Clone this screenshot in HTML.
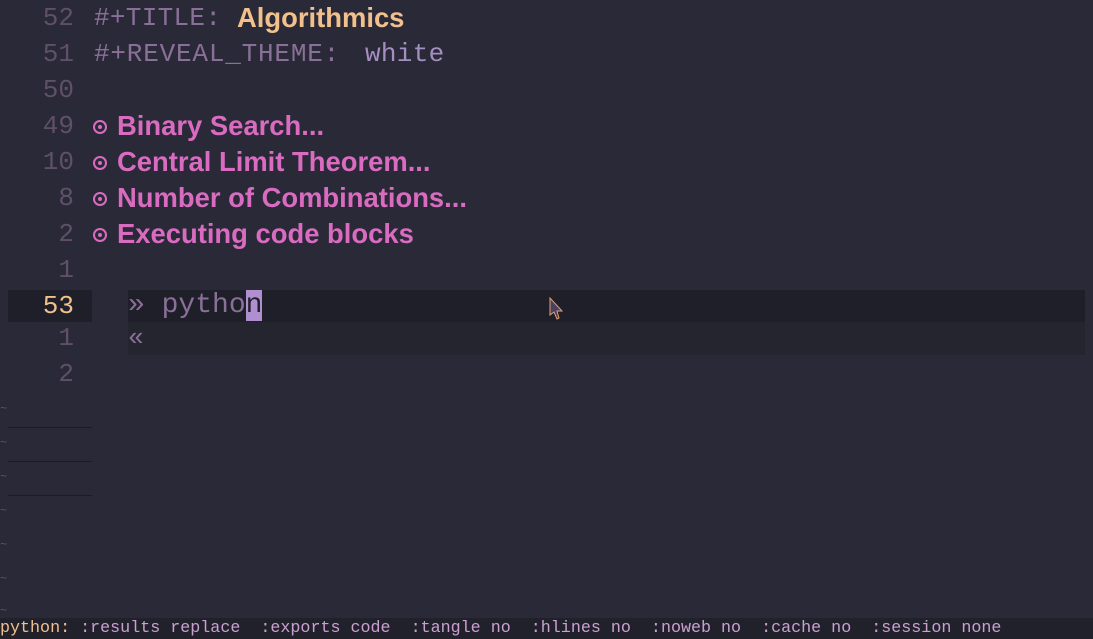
<!DOCTYPE html>
<html><head><style>
body{margin:0;width:1093px;height:639px;background:#292937;overflow:hidden;position:relative;font-family:"Liberation Mono",monospace}
.ln{position:absolute;left:0;width:74px;text-align:right;font-size:26px;color:#5f5068;line-height:36px;height:36px}
.tx{position:absolute;left:94px;font-size:26px;line-height:36px;height:36px;white-space:pre;color:#8a7098;letter-spacing:0.3px}
.h{position:absolute;left:117px;font-family:"Liberation Sans",sans-serif;font-weight:bold;color:#d96bc0;font-size:27.4px;line-height:36px;white-space:pre}
.b{position:absolute;left:93px;width:10px;height:10px;border:2px solid #d96bc0;border-radius:50%}
.b::after{content:"";position:absolute;left:3px;top:3px;width:4px;height:4px;border-radius:50%;background:#d96bc0}
.t{position:absolute;left:0;font-size:12px;color:#5f5068}
</style></head><body>
<div class="ln" style="top:0">52</div><div class="tx" style="top:0">#+TITLE: </div><div class="h" style="top:0;left:237px;color:#f1c08c">Algorithmics</div>
<div class="ln" style="top:36px">51</div><div class="tx" style="top:36px;letter-spacing:0.8px">#+REVEAL_THEME:</div><div class="tx" style="top:36px;left:365px;color:#a48fc0">white</div>
<div class="ln" style="top:72px">50</div>
<div class="ln" style="top:108px">49</div><div class="b" style="top:120px"></div><div class="h" style="top:108px">Binary Search...</div>
<div class="ln" style="top:144px">10</div><div class="b" style="top:156px"></div><div class="h" style="top:144px">Central Limit Theorem...</div>
<div class="ln" style="top:180px">8</div><div class="b" style="top:192px"></div><div class="h" style="top:180px">Number of Combinations...</div>
<div class="ln" style="top:216px">2</div><div class="b" style="top:228px"></div><div class="h" style="top:216px">Executing code blocks</div>
<div class="ln" style="top:252px">1</div>
<div style="position:absolute;left:8px;top:290px;width:84px;height:32px;background:#1f1f29"></div>
<div style="position:absolute;left:128px;top:290px;width:957px;height:32px;background:#1f1f29"></div>
<div style="position:absolute;left:128px;top:322px;width:957px;height:33px;background:#25252f"></div>
<div class="ln" style="top:288px;color:#f1c08c">53</div>
<div class="tx" style="top:288px;left:128px;color:#8a7098;font-size:28px;letter-spacing:0">» pytho<span style="background:#b08fd0;color:#1f1f29">n</span></div>
<div class="ln" style="top:320px">1</div><div class="tx" style="top:320px;left:128px">«</div>
<div class="ln" style="top:356px">2</div>
<svg style="position:absolute;left:549px;top:297px" width="16" height="24"><path d="M1 1 L1 18 L5 15 L8 22 L10 21 L8 14 L13 14 Z" fill="#4a4060" stroke="#e0a070" stroke-width="1"/></svg>
<div class="t" style="top:402px">~</div><div class="t" style="top:436px">~</div><div class="t" style="top:470px">~</div><div class="t" style="top:504px">~</div><div class="t" style="top:538px">~</div><div class="t" style="top:572px">~</div><div class="t" style="top:604px">~</div>
<div style="position:absolute;left:8px;top:427px;width:84px;height:1px;background:#1c1c26"></div>
<div style="position:absolute;left:8px;top:461px;width:84px;height:1px;background:#1c1c26"></div>
<div style="position:absolute;left:8px;top:495px;width:84px;height:1px;background:#1c1c26"></div>
<div style="position:absolute;left:0;top:618px;width:1093px;height:21px;background:#21212c"></div>
<div style="position:absolute;left:0;top:618px;font-size:16.7px;line-height:21px;white-space:pre;color:#c9a0d0"><span style="color:#f1c08c">python:</span> :results replace  :exports code  :tangle no  :hlines no  :noweb no  :cache no  :session none</div>
</body></html>
